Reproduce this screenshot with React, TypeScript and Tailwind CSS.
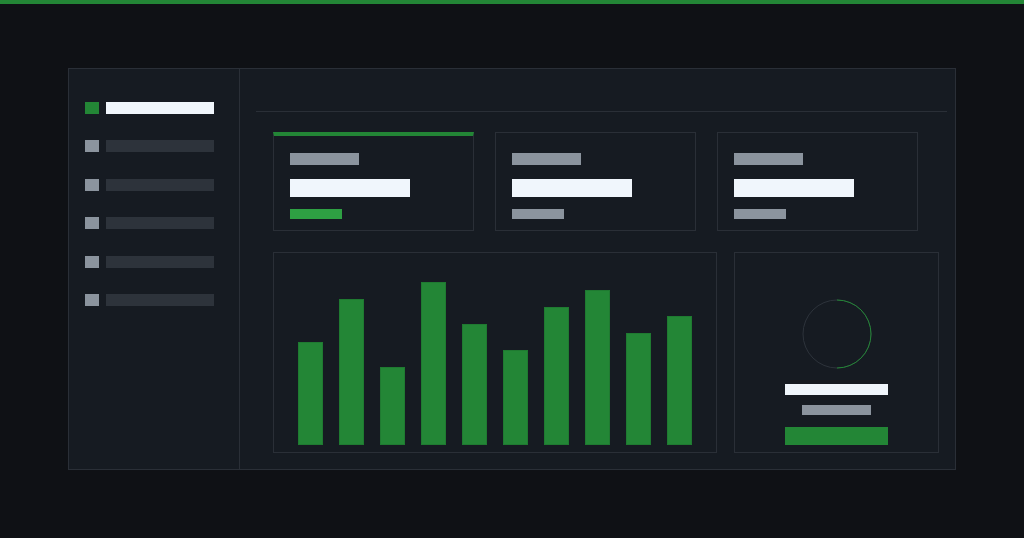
import React from 'react';

const bars = [103, 146, 78, 163, 121, 95, 138, 155, 112, 129];

const navItems = [true, false, false, false, false, false];

const StatCard: React.FC<{ active?: boolean }> = ({ active }) => (
  <div
    className={`w-[201px] h-[99px] border border-[#2a2f37] ${
      active ? 'border-t-4 border-t-[#238636] pt-[17px]' : 'pt-[20px]'
    } pl-[16px] flex flex-col`}
  >
    <div className="w-[69px] h-[12px] bg-[#8b949e]" />
    <div className="w-[120px] h-[18px] bg-[#f0f6fc] mt-[14px]" />
    <div className={`w-[52px] h-[10px] mt-[12px] ${active ? 'bg-[#2ea043]' : 'bg-[#8b949e]'}`} />
  </div>
);

export default function App() {
  return (
    <div className="w-[1024px] h-[538px] bg-[#0f1115] overflow-hidden">
      {/* top accent */}
      <div className="h-[4px] bg-[#238636]" />

      {/* window frame */}
      <div className="ml-[68px] mt-[64px] w-[888px] h-[402px] bg-[#161b22] border border-[#2a2f37] flex">
        {/* Sidebar */}
        <div className="w-[171px] border-r border-[#2a2f37] pt-[33px] pl-[16px] flex flex-col gap-[26.4px]">
          {navItems.map((active, i) => (
            <div key={i} className="flex items-center gap-[7px]">
              <div className={`w-[14px] h-[12px] ${active ? 'bg-[#238636]' : 'bg-[#8b949e]'}`} />
              <div className={`w-[108px] h-[12px] ${active ? 'bg-[#f0f6fc]' : 'bg-[#2d333b]'}`} />
            </div>
          ))}
        </div>

        {/* Main */}
        <div className="flex-1 pt-[42px] pl-[16px] pr-[8px]">
          <div className="h-px bg-[#2a2f37]" />

          <div className="ml-[17px] mt-[20px]">
            <div className="flex gap-[21px]">
              <StatCard active />
              <StatCard />
              <StatCard />
            </div>

            <div className="flex gap-[17px] mt-[21px]">
              {/* Bar chart */}
              <div className="w-[444px] h-[201px] border border-[#2a2f37] flex items-end gap-[16px] pl-[24px] pb-[7px]">
                {bars.map((h, i) => (
                  <div
                    key={i}
                    className="w-[25px] bg-[#238636] border border-[#1f7a31]"
                    style={{ height: h }}
                  />
                ))}
              </div>

              {/* Ring card */}
              <div className="w-[205px] h-[201px] border border-[#2a2f37] flex flex-col items-center pt-[46px]">
                <svg width="70" height="70" viewBox="0 0 70 70">
                  <circle cx="35" cy="35" r="34" fill="none" stroke="#2d333b" strokeWidth="1" />
                  <path d="M35 1 A34 34 0 0 1 35 69" fill="none" stroke="#238636" strokeWidth="1" />
                </svg>
                <div className="w-[103px] h-[11px] bg-[#f0f6fc] mt-[15px]" />
                <div className="w-[69px] h-[10px] bg-[#8b949e] mt-[10px]" />
                <div className="w-[103px] h-[18px] bg-[#238636] mt-[12px]" />
              </div>
            </div>
          </div>
        </div>
      </div>
    </div>
  );
}
